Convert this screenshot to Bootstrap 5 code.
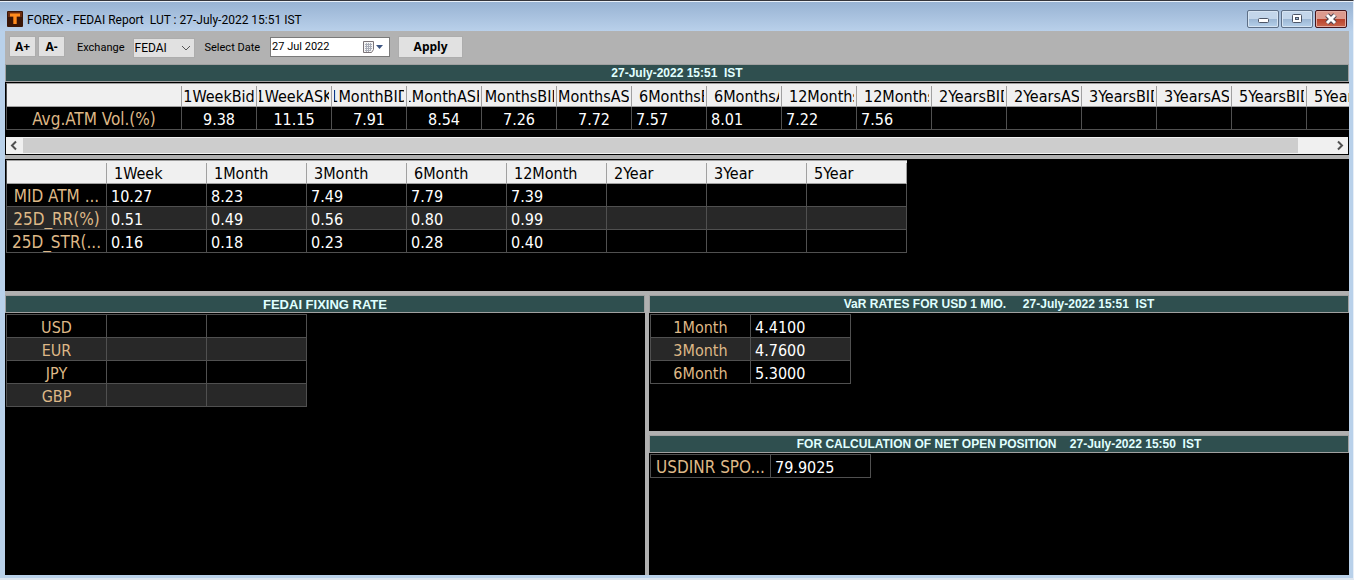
<!DOCTYPE html>
<html lang="en">
<head>
<meta charset="utf-8">
<meta name="viewport" content="width=device-width, initial-scale=1">
<title>FOREX - FEDAI Report</title>
<link href="https://cdn.jsdelivr.net/npm/bootstrap@5.3.0/dist/css/bootstrap.min.css" rel="stylesheet">
<style>
  body { font-family: "Liberation Sans", sans-serif; font-size: 12px; line-height: 16px; color: #000; background: #b9d1ea; }
  .win { border-top: 1px solid #35353b; border-bottom: 2px solid #dde6f0; padding: 0 4px 3px 5px; border-right: 1px solid #e6eef7; }
  .titlebar { height: 30px; margin: 0 -4px 0 -5px; padding: 6px 6px 0 7px; background: linear-gradient(#e9f0f8 0 1px, #98b3d3 1px, #b9d0ea); font-family: Roboto, sans-serif; white-space: pre; }
  .titlebar h1 { font-size: 12px; line-height: 26px; font-weight: 400; }
  .caps { gap: 2px; }
  .cap { width: 32px; height: 18px; margin-top: 3px; padding: 0; border: 1px solid #5d6f86; border-radius: 2px; background: linear-gradient(#c3d6ea 50%, #9bb6d3 50%, #b5d0ea); box-shadow: inset 0 0 0 1px #d6e4f2; }
  .cap-close { border-color: #45141a; background: linear-gradient(#dc9a8e 50%, #b8402a 50%, #c9674e); box-shadow: inset 0 0 0 1px #e3aca2; }
  .bar { height: 33px; padding: 5px 4px 0; background: #b2b2b2; font-family: Roboto, sans-serif; font-size: 11px; }
  .ctl { border: 1px solid #adadad; border-radius: 0; background: #e1e1e1; padding: 0; height: 22px; font: 700 12px/16px "Open Sans", sans-serif; }
  .ctl-zoom { width: 27px; height: 21px; margin-right: 2px; }
  .ctl-apply { width: 65px; }
  .pick { width: 62px; height: 20px; margin-top: 2px; padding: 0 1px; border: 1px solid #adadad; border-radius: 0; appearance: none; font-size: 12px;
    background: #e1e1e1 url("data:image/svg+xml,%3Csvg xmlns='http://www.w3.org/2000/svg' width='10' height='6'%3E%3Cpath d='M1 1l4 4 4-4' fill='none' stroke='%23555'/%3E%3C/svg%3E") no-repeat right 3px center; }
  .datebox { width: 120px; height: 20px; margin: 1px 0 0 2px; border: 1px solid #7a7a7a; background: #fff; }
  .datebox input { width: 91px; border: 0; padding: 0 0 0 1px; font-size: 11px; line-height: 16px; background: none; }
  .lbl { line-height: 24px; padding: 0 8px 0 10px; }
  .head { height: 18px; border: 1px solid #a0a0a0; background: #2f4f4f; color: #e0ffff; text-align: center; white-space: pre; font-weight: 700; font-size: 12px; line-height: 17px; margin: 0; }
  .head-lg { font-size: 13px; line-height: 18px; }
  .pane { background: #000; padding: 1px; overflow: hidden; }
  .pane-mid { min-height: 132px; }
  .pane-var { min-height: 118px; }
  .work { background: #b0b0b0; }
  .split { column-gap: 4px; }
  .split > .lft { flex: 640 1 0; min-width: 0; }
  .split > .rgt { flex: 700 1 0; min-width: 0; }
  .grid { table-layout: fixed; width: 0; border-collapse: separate; border-spacing: 0; border: solid #505050; border-width: 1px 0 0 1px; color: #fff; font-family: "DejaVu Sans Condensed", "Noto Sans", sans-serif; font-size: 16px; line-height: 19px; white-space: nowrap; }
  .grid td, .grid tbody th { height: 23px; padding: 3px 0 0 4px; border: solid #505050; border-width: 0 1px 1px 0; overflow: hidden; }
  .grid tbody th { color: #deb887; font-weight: 400; text-align: center; padding: 3px 0 0; }
  .grid tbody th.wide { font-size: 17px; }
  .grid td.mid { text-align: center; padding: 3px 0 0; }
  .grid tbody tr:nth-child(even) > * { background: #282828; }
  .grid thead th { height: 23px; padding: 0 3px 0 2px; font-weight: 400; color: #000; border-bottom: 1px solid #a0a0a0; background: linear-gradient(#a0a0a0, #a0a0a0) right bottom / 1px 20px no-repeat #f0f0f0; }
  .grid-top { border-top-color: #a0a0a0; }
  .clip { display: flex; overflow: hidden; height: 22px; padding: 3px 0 0 5px; }
  .clip span { flex: none; }
  .clip-mid { justify-content: center; padding-left: 0; }
  .hscroll { height: 17px; margin-top: 7px; background: #f0f0f0; }
  .hscroll button { width: 17px; height: 17px; border: 0; padding: 0; background: #f0f0f0; line-height: 0; }
  .thumb { flex: 0 1 1275px; height: 15px; margin-top: 1px; background: #cdcdcd; }
</style>
</head>
<body>
<div class="win min-vh-100 d-flex flex-column">
  <header class="titlebar d-flex">
    <svg width="16" height="16" viewBox="0 0 16 16" class="flex-shrink-0 mt-1 me-1" aria-hidden="true"><rect width="16" height="16" rx="1" fill="#3a1607"/><path d="M1 1h14v5H1z" fill="#6b2c10"/><path d="M3 2.500h10v3H9.700V13H6.300V5.500H3z" fill="#ff8c1e"/></svg>
    <h1 class="m-0 me-auto">FOREX - FEDAI Report  LUT : 27-July-2022 15:51 IST</h1>
    <div class="caps d-flex">
      <button class="cap" aria-label="Minimize"><svg width="30" height="16" class="d-block"><rect x="10.500" y="7.500" width="10" height="4" rx="1" fill="#fff" stroke="#4c5566"/></svg></button>
      <button class="cap" aria-label="Restore"><svg width="30" height="16" class="d-block"><rect x="10.500" y="3.500" width="9" height="8" rx="1" fill="#fff" stroke="#4c5566"/><rect x="13.500" y="6.500" width="3" height="2" fill="#9bb6d3" stroke="#4c5566"/></svg></button>
      <button class="cap cap-close" aria-label="Close"><svg width="30" height="16" class="d-block"><path d="M11 4l8 8M19 4l-8 8" stroke="#4c4450" stroke-width="5"/><path d="M11 4l8 8M19 4l-8 8" stroke="#fff" stroke-width="3"/></svg></button>
    </div>
  </header>

  <form class="bar d-flex align-items-start">
    <button type="button" class="ctl ctl-zoom">A+</button>
    <button type="button" class="ctl ctl-zoom">A-</button>
    <label class="lbl" for="ex">Exchange</label>
    <select class="pick" id="ex"><option>FEDAI</option></select>
    <label class="lbl" for="dt">Select Date</label>
    <div class="datebox d-flex align-items-center">
      <input id="dt" type="text" value="27 Jul 2022">
      <svg width="22" height="14" aria-hidden="true"><path d="M1.500 1.500h10v8l-2 3h-8z" fill="#f5f5f5" stroke="#7b7478"/><path d="M3 4.500h7M3 6.500h7M3 8.500h7M3 10.500h5M4.500 3v9M6.500 3v9M8.500 3v8" stroke="#a9adb8"/><path d="M14 5h7l-3.500 4z" fill="#3d5582"/></svg>
    </div>
    <button type="button" class="ctl ctl-apply ms-2">Apply</button>
  </form>

  <main class="work flex-grow-1 d-flex flex-column">
    <h2 class="head">27-July-2022 15:51  IST</h2>
    <section class="pane">
      <table class="grid grid-top">
        <colgroup><col style="width:175px"><col span="16" style="width:75px"></colgroup>
        <thead><tr><th></th>
          <th><div class="clip clip-mid"><span>1WeekBid</span></div></th><th><div class="clip clip-mid"><span>1WeekASK</span></div></th>
          <th><div class="clip clip-mid"><span>1MonthBID</span></div></th><th><div class="clip clip-mid"><span>1MonthASK</span></div></th>
          <th><div class="clip clip-mid"><span>3MonthsBID</span></div></th><th><div class="clip clip-mid"><span>3MonthsASK</span></div></th>
          <th><div class="clip"><span>6MonthsBID</span></div></th><th><div class="clip"><span>6MonthsASK</span></div></th>
          <th><div class="clip"><span>12MonthsBID</span></div></th><th><div class="clip"><span>12MonthsASK</span></div></th>
          <th><div class="clip"><span>2YearsBID</span></div></th><th><div class="clip"><span>2YearsASK</span></div></th>
          <th><div class="clip"><span>3YearsBID</span></div></th><th><div class="clip"><span>3YearsASK</span></div></th>
          <th><div class="clip"><span>5YearsBID</span></div></th><th><div class="clip"><span>5YearsASK</span></div></th>
        </tr></thead>
        <tbody><tr><th class="wide">Avg.ATM Vol.(%)</th>
          <td class="mid">9.38</td><td class="mid">11.15</td><td class="mid">7.91</td><td class="mid">8.54</td><td class="mid">7.26</td><td class="mid">7.72</td>
          <td>7.57</td><td>8.01</td><td>7.22</td><td>7.56</td><td></td><td></td><td></td><td></td><td></td><td></td>
        </tr></tbody>
      </table>
      <div class="hscroll d-flex">
        <button type="button" aria-label="Scroll left"><svg width="17" height="17"><path d="M10 4.500L6 8.500l4 4" fill="none" stroke="#505050" stroke-width="2"/></svg></button>
        <div class="thumb"></div>
        <button type="button" class="ms-auto" aria-label="Scroll right"><svg width="17" height="17"><path d="M7 4.500l4 4-4 4" fill="none" stroke="#505050" stroke-width="2"/></svg></button>
      </div>
    </section>

    <section class="pane pane-mid mt-1">
      <table class="grid grid-top">
        <colgroup><col span="9" style="width:100px"></colgroup>
        <thead><tr><th></th>
          <th><div class="clip"><span>1Week</span></div></th><th><div class="clip"><span>1Month</span></div></th><th><div class="clip"><span>3Month</span></div></th><th><div class="clip"><span>6Month</span></div></th>
          <th><div class="clip"><span>12Month</span></div></th><th><div class="clip"><span>2Year</span></div></th><th><div class="clip"><span>3Year</span></div></th><th><div class="clip"><span>5Year</span></div></th>
        </tr></thead>
        <tbody>
          <tr><th class="wide">MID ATM ...</th><td>10.27</td><td>8.23</td><td>7.49</td><td>7.79</td><td>7.39</td><td></td><td></td><td></td></tr>
          <tr><th class="wide">25D_RR(%)</th><td>0.51</td><td>0.49</td><td>0.56</td><td>0.80</td><td>0.99</td><td></td><td></td><td></td></tr>
          <tr><th class="wide">25D_STR(...</th><td>0.16</td><td>0.18</td><td>0.23</td><td>0.28</td><td>0.40</td><td></td><td></td><td></td></tr>
        </tbody>
      </table>
    </section>

    <div class="split d-flex flex-grow-1 mt-1">
      <section class="lft d-flex flex-column">
        <h2 class="head head-lg">FEDAI FIXING RATE</h2>
        <div class="pane flex-grow-1">
          <table class="grid">
            <colgroup><col span="3" style="width:100px"></colgroup>
            <tbody>
              <tr><th>USD</th><td></td><td></td></tr>
              <tr><th>EUR</th><td></td><td></td></tr>
              <tr><th>JPY</th><td></td><td></td></tr>
              <tr><th>GBP</th><td></td><td></td></tr>
            </tbody>
          </table>
        </div>
      </section>
      <div class="rgt d-flex flex-column">
        <h2 class="head">VaR RATES FOR USD 1 MIO.     27-July-2022 15:51  IST</h2>
        <div class="pane pane-var">
          <table class="grid">
            <colgroup><col span="2" style="width:100px"></colgroup>
            <tbody>
              <tr><th>1Month</th><td>4.4100</td></tr>
              <tr><th>3Month</th><td>4.7600</td></tr>
              <tr><th>6Month</th><td>5.3000</td></tr>
            </tbody>
          </table>
        </div>
        <h2 class="head mt-1">FOR CALCULATION OF NET OPEN POSITION    27-July-2022 15:50  IST</h2>
        <div class="pane flex-grow-1">
          <table class="grid">
            <colgroup><col style="width:120px"><col style="width:100px"></colgroup>
            <tbody><tr><th class="wide">USDINR SPO...</th><td>79.9025</td></tr></tbody>
          </table>
        </div>
      </div>
    </div>
  </main>
</div>
<script src="https://cdn.jsdelivr.net/npm/bootstrap@5.3.0/dist/js/bootstrap.bundle.min.js"></script>
</body>
</html>
